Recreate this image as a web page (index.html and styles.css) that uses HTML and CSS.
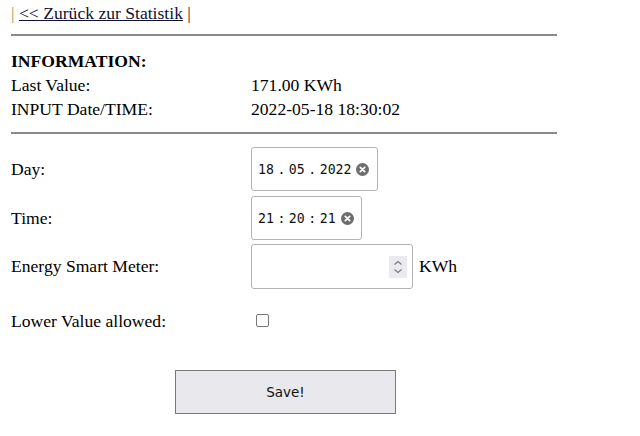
FILE: index.html
```html
<!DOCTYPE html>
<html>
<head>
<meta charset="utf-8">
<link rel="stylesheet" href="styles.css">
</head>
<body>
<div class="page">
  <div class="nav"><span class="pipe">|</span> <a class="back" href="#">&lt;&lt; Zurück zur Statistik</a> <span class="pipe-end">|</span></div>
  <div class="rule rule-top"></div>
  <div class="info">
    <div class="info-title">INFORMATION:</div>
    <div class="info-grid">
      <div>Last Value:</div><div>171.00 KWh</div>
      <div>INPUT Date/TIME:</div><div>2022-05-18 18:30:02</div>
    </div>
  </div>
  <div class="rule rule-mid"></div>
  <div class="form">
    <div class="row row-day">
      <div class="label">Day:</div>
      <div class="field">
        <div class="box box-date"><span class="mono"><span>18</span><span class="sep">.</span><span>05</span><span class="sep">.</span><span>2022</span></span><span class="clear"><svg viewBox="0 0 13 13" width="13" height="13"><circle cx="6.5" cy="6.5" r="6.5" fill="#6d6d6d"/><path d="M4.3 4.3L8.7 8.7M8.7 4.3L4.3 8.7" stroke="#fff" stroke-width="1.7" stroke-linecap="round"/></svg></span></div>
      </div>
    </div>
    <div class="row row-time">
      <div class="label">Time:</div>
      <div class="field">
        <div class="box box-time"><span class="mono"><span>21</span><span class="sep">:</span><span>20</span><span class="sep">:</span><span>21</span></span><span class="clear"><svg viewBox="0 0 13 13" width="13" height="13"><circle cx="6.5" cy="6.5" r="6.5" fill="#6d6d6d"/><path d="M4.3 4.3L8.7 8.7M8.7 4.3L4.3 8.7" stroke="#fff" stroke-width="1.7" stroke-linecap="round"/></svg></span></div>
      </div>
    </div>
    <div class="row row-energy">
      <div class="label">Energy Smart Meter:</div>
      <div class="field">
        <div class="box box-number"><span class="spin"><svg viewBox="0 0 18 22" width="18" height="22"><path d="M5.5 8.5L9 5.5L12.5 8.5M5.5 13.5L9 16.5L12.5 13.5" fill="none" stroke="#7a7a7a" stroke-width="1.2"/></svg></span></div>
        <span class="unit">KWh</span>
      </div>
    </div>
    <div class="row row-check">
      <div class="label">Lower Value allowed:</div>
      <div class="field"><span class="check"></span></div>
    </div>
    <div class="actions"><button class="save" type="button">Save!</button></div>
  </div>
</div>
</body>
</html>
```
FILE: styles.css
```css
html, body {
  margin: 0;
  padding: 0;
  background: #fff;
}
body {
  font-family: "Liberation Serif", "Times New Roman", serif;
  font-size: 17.6px;
  color: #000;
}
.page {
  padding: 3px 0 0 11px;
  width: 546px;
}
.nav {
  line-height: 20px;
  height: 20px;
  white-space: nowrap;
}
.pipe {
  color: #a89a55;
}
.pipe-end {
  color: #222;
}
.back {
  color: #101030;
  text-decoration: underline;
}
.rule {
  height: 2px;
  background: #8a8a8a;
  width: 546px;
}
.rule-top {
  margin-top: 11px;
}
.info {
  padding-top: 13px;
}
.info-title {
  font-weight: bold;
  line-height: 24px;
  height: 24px;
}
.info-grid {
  display: grid;
  grid-template-columns: 240px auto;
  grid-auto-rows: 24px;
  line-height: 24px;
}
.rule-mid {
  margin-top: 11px;
}
.form {
  padding-top: 13px;
}
.row {
  display: grid;
  grid-template-columns: 240px auto;
  align-items: center;
}
.row-day { height: 44px; }
.row-time { height: 44px; margin-top: 5px; }
.row-energy { height: 45px; margin-top: 4px; }
.row-check { height: 32px; margin-top: 16px; }
.field {
  display: flex;
  align-items: center;
}
.box {
  box-sizing: border-box;
  height: 44px;
  border: 1px solid #b4b4b8;
  border-radius: 3px;
  display: flex;
  align-items: center;
  background: #fff;
  white-space: nowrap;
}
.box-date { width: 127px; padding-left: 6px; }
.box-time { width: 111px; padding-left: 6px; }
.box-number { width: 162px; height: 45px; justify-content: flex-end; padding-right: 5px; }
.mono {
  display: flex;
  align-items: baseline;
  font-family: "DejaVu Sans Mono", "Liberation Mono", monospace;
  font-size: 13.2px;
  color: #111;
}
.sep {
  margin: 0 3.5px;
}
.clear {
  display: flex;
  margin-left: 5px;
}
.spin {
  display: flex;
  background: #ebebef;
  width: 18px;
  height: 22px;
}
.unit {
  margin-left: 6px;
}
.check {
  box-sizing: border-box;
  display: block;
  width: 13px;
  height: 13px;
  border: 1.5px solid #777;
  border-radius: 2px;
  margin-left: 5px;
  margin-top: -2px;
}
.actions {
  padding-left: 164px;
  margin-top: 33px;
}
.save {
  box-sizing: border-box;
  width: 221px;
  height: 44px;
  background: #e9e9ed;
  border: 1px solid #7a7a7a;
  border-radius: 0;
  font-family: "DejaVu Sans", Tahoma, sans-serif;
  font-size: 13.5px;
  color: #111;
  padding: 0;
}
```
